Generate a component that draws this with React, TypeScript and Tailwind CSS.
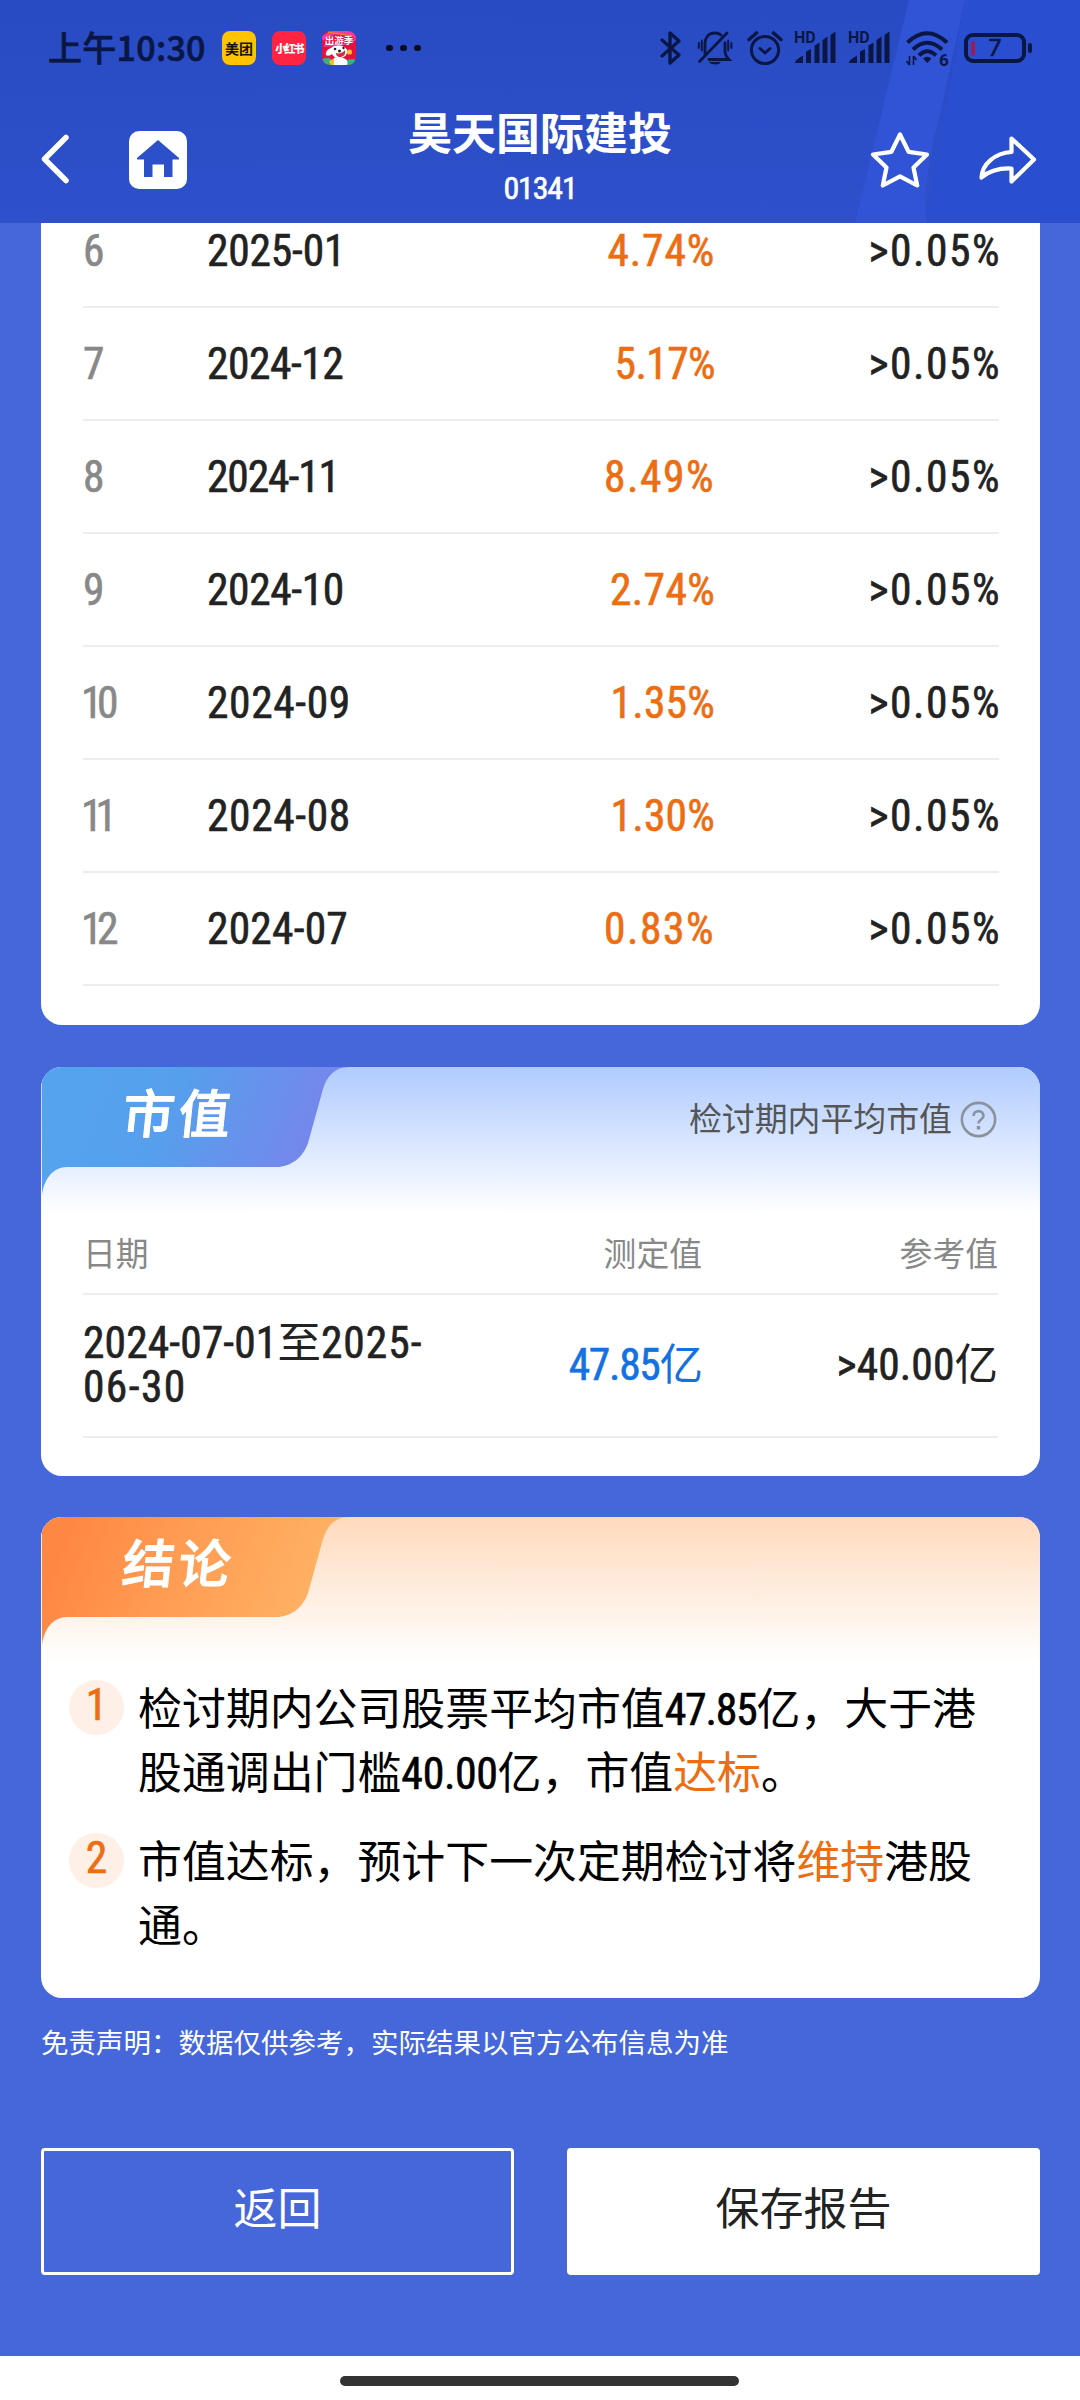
import clsx from "clsx";
import type { ReactNode } from "react";

const ink = "#0a1745";

const rows = [
    { id: 6, month: "2025-01", value: "4.74%", tight: "tracking-[0.8px]", monthTight: "tracking-[-0.2px]" },
    { id: 7, month: "2024-12", value: "5.17%", tight: "tracking-[-0.6px]", monthTight: "tracking-[-0.5px]" },
    { id: 8, month: "2024-11", value: "8.49%", tight: "tracking-[1.5px]", monthTight: "tracking-[-1.1px]" },
    { id: 9, month: "2024-10", value: "2.74%", tight: "tracking-[0.3px]", monthTight: "tracking-[-0.4px]" },
    { id: 10, month: "2024-09", value: "1.35%", tight: "tracking-[0.2px]", monthTight: "tracking-[0.6px]", idTight: "tracking-[-5.5px] -ml-[2px] mr-[2px]" },
    { id: 11, month: "2024-08", value: "1.30%", tight: "tracking-[0.2px]", monthTight: "tracking-[0.6px]", idTight: "tracking-[-7px] -ml-[2px] mr-[2px]" },
    { id: 12, month: "2024-07", value: "0.83%", tight: "tracking-[1.5px]", monthTight: "tracking-[0.2px]", idTight: "tracking-[-5.5px] -ml-[2px] mr-[2px]" },
];

const Num = ({ children, className }: { children: ReactNode; className?: string }) => (
    <span className={clsx("font-['Roboto_Condensed'] [-webkit-text-stroke:0.6px_currentColor]", className)}>{children}</span>
);

const BluetoothIcon = () => (
    <svg width="24" height="36" viewBox="0 0 24 36" fill="none" stroke={ink} strokeWidth="3.4" strokeLinejoin="round" strokeLinecap="round">
        <path d="M3 10 20 25 11 33V3L20 11 3 26" />
    </svg>
);

const MutedBellIcon = () => (
    <svg width="36" height="36" viewBox="0 0 36 36" fill="none" stroke={ink} strokeWidth="2.8" strokeLinecap="round">
        <path d="M8 24V14C8 7 12 3 18 3c2.500 0 4.500.700 6 2" />
        <path d="M28 13v8c0 4 1.500 6 4 8.500H12" />
        <path d="M30 3 2.500 31.500" />
        <path d="M13 32.500h10c-1 2-8 2-10 0z" fill={ink} strokeWidth="1" />
        <path d="M1.800 13v5M4.800 10.500v10M31.200 10.500v10M34.400 13v5" strokeWidth="2" />
    </svg>
);

const AlarmIcon = () => (
    <svg width="36" height="36" viewBox="0 0 36 36" fill="none" stroke={ink} strokeWidth="3" strokeLinecap="round" strokeLinejoin="round">
        <circle cx="18" cy="20" r="13.600" />
        <path d="M13 18.500 18 23l5-4.500" />
        <path d="M9.500 3 2 9.500M26.500 3 34 9.500" strokeWidth="3.600" />
    </svg>
);

const SignalIcon = () => (
    <div className="relative h-[36px] w-[42px]">
        <svg width="42" height="36" viewBox="0 0 42 36" fill={ink}>
            <path d="M1 33c0-3 5-5.500 8-7.500V33H1zM12 21.500l5-2.500v14h-5zM20.500 15.500l5-3V33h-5zM28.500 10l5-3.500V33h-5zM36.500 5l5-3.500V33h-5z" />
        </svg>
        <span className="absolute -top-[1px] left-0 font-['Roboto'] text-[16px] font-bold leading-[18px] text-[#0a1745]">HD</span>
    </div>
);

const WifiIcon = () => (
    <div className="relative h-[36px] w-[44px]">
        <svg width="44" height="36" viewBox="0 0 44 36" fill="none" stroke={ink} strokeWidth="4">
            <path d="M1.500 12.500Q21 -6 41 12.500" />
            <path d="M7 19.500Q21 6 36 19.500" />
            <path d="M13 25.500Q21 17 30 25.500" />
            <path d="M17 28.500q4-3.500 8.500 0L21.300 33z" fill={ink} stroke="none" />
            <path d="M3.500 26v9M3.500 35 .5 31M7.500 35v-9M7.500 26l3 4" strokeWidth="1.600" />
        </svg>
        <span className="absolute left-[33px] top-[21px] font-['Roboto'] text-[17px] font-bold leading-[18px] text-[#0a1745]">6</span>
    </div>
);

const BatteryIcon = () => (
    <div className="flex items-center gap-[2px]">
        <div className="relative flex h-[30px] w-[62px] items-center justify-center rounded-[9px] border-4 border-[#0a1745]">
            <div className="absolute left-[3px] top-[4px] h-[15px] w-[4px] rounded-sm bg-[#a01b53]" />
            <span className="font-['Inter'] text-[23px] leading-none text-[#0a1745] [-webkit-text-stroke:0.6px_currentColor]">7</span>
        </div>
        <div className="h-[10px] w-[4px] rounded-sm bg-[#0a1745]" />
    </div>
);

const CartoonAppIcon = () => (
    <svg className="ml-[16px]" width="34" height="34" viewBox="0 0 34 34">
        <clipPath id="cartoon">
            <rect width="34" height="34" rx="8" />
        </clipPath>
        <g clipPath="url(#cartoon)">
            <rect width="34" height="34" fill="#e3123f" />
            <path d="M0 8C8 0 26-2 34 6" stroke="#f43aa0" strokeWidth="4" fill="none" />
            <path d="M34 4C36 12 20 15 2 15" stroke="#f43aa0" strokeWidth="1.500" fill="none" />
            <path d="M6 1l24 4" stroke="#f07a2c" strokeWidth="1.500" />
            <ellipse cx="5" cy="32" rx="7" ry="5" fill="#3cae84" />
            <ellipse cx="30" cy="32" rx="7" ry="4" fill="#3cae84" />
            <path d="M10 34c-1-6 3-9 8-8s9 3 7 8z" fill="#fff" />
            <path d="M9 17C13 13 23 14 25 19c1 5-3 8-8 8-4 0-6-2-7-4-2 2-5 2-6 1-1-3 2-6 5-7z" fill="#fff" />
            <path d="M14 22c3 1 7 0 9-3 1 5-2 7-5 7s-4-2-4-4z" fill="#d42b3e" />
            <circle cx="13" cy="18" r="1.300" fill="#222" />
            <circle cx="17.500" cy="20" r="1.500" fill="#222" />
            <circle cx="21.500" cy="17" r="1.200" fill="#222" />
            <circle cx="27.500" cy="21" r="2.600" fill="#fcbf2e" />
            <path d="M7 30l5-2v6H9z" fill="#fcbf2e" />
            <text x="17" y="13" textAnchor="middle" fontSize="9.500" fontWeight="700" fill="#fff" fontFamily="Noto Sans CJK SC">出游季</text>
        </g>
    </svg>
);

const StatusBar = () => (
    <div className="flex h-[96px] items-center pl-[48px] pr-[48px]">
        <span className="-mt-[3px] w-[158px] whitespace-nowrap font-['Noto_Sans_CJK_SC'] text-[34px] font-medium leading-none tracking-[0.3px] text-[#0a1745] [-webkit-text-stroke:0.7px_currentColor]">
            上午10:30
        </span>
        <div className="ml-[16px] flex size-[34px] items-center justify-center rounded-[8px] bg-[#ffc300] font-['Noto_Sans_CJK_SC'] text-[14px] font-bold leading-none text-[#17140a]">
            美团
        </div>
        <div className="ml-[16px] flex size-[34px] items-center justify-center rounded-[8px] bg-[#ff2442] font-['Noto_Sans_CJK_SC'] text-[11px] font-black leading-none tracking-[-1.8px] text-white">
            小红书
        </div>
        <CartoonAppIcon />
        <div className="ml-[30px] flex gap-[7.500px]">
            <i className="size-[6.500px] rounded-full bg-[#050b22]" />
            <i className="size-[6.500px] rounded-full bg-[#050b22]" />
            <i className="size-[6.500px] rounded-full bg-[#050b22]" />
        </div>
        <div className="ml-auto flex items-center">
            <BluetoothIcon />
            <div className="w-[14px]" />
            <MutedBellIcon />
            <div className="w-[14px]" />
            <AlarmIcon />
            <div className="w-[11px]" />
            <SignalIcon />
            <div className="w-[12px]" />
            <SignalIcon />
            <div className="w-[16px]" />
            <WifiIcon />
            <div className="w-[14px]" />
            <BatteryIcon />
        </div>
    </div>
);

const Header = () => (
    <header className="relative h-[223px] bg-gradient-to-b from-[#284bc4] to-[#2e51cb]">
        <svg className="absolute right-0 top-0" width="240" height="223" viewBox="0 0 240 223">
            <path d="M125 0h115v223H85z" fill="#2a4ed0" />
            <path d="M69 0h56L101 110Q80 190 87 223H15z" fill="#3054d5" />
        </svg>
        <div className="relative">
            <StatusBar />
            <div className="flex h-[126px] items-center pl-[40px] pr-[43px]">
                <svg width="32" height="54" viewBox="0 0 32 54" fill="none" stroke="#fff" strokeWidth="5.500" strokeLinecap="round" strokeLinejoin="round">
                    <path d="M26 5.500 4.500 27 26 48.500" />
                </svg>
                <svg className="ml-[57px] mt-[1px]" width="58" height="58" viewBox="0 0 58 58">
                    <rect width="58" height="58" rx="10" fill="#fff" />
                    <path d="M29 9 50 27v1.500h-6.500V46H35V33.500H23.500V46H15V28.500H8V27z" fill="#2c50c9" />
                </svg>
                <div className="flex flex-1 flex-col items-center pl-[34px] text-white">
                    <h1 className="mt-[-5px] font-['Noto_Sans_CJK_SC'] text-[44px] font-bold leading-[62px]">昊天国际建投</h1>
                    <Num className="text-[32px] leading-[52px] tracking-[-1.2px]">01341</Num>
                </div>
                <svg className="ml-[10px]" width="60" height="60" viewBox="0 0 60 60" fill="none" stroke="#fff" strokeWidth="4.200" strokeLinejoin="round">
                    <path d="M31 5.500 39.600 22.800 58 25.500 44.500 38.500 48.200 56.500 31 47.300 13.800 56.500 17.500 38.500 4 25.500 22.400 22.800z" />
                </svg>
                <svg className="ml-[48px]" width="60" height="60" viewBox="0 0 60 60" fill="none" stroke="#fff" strokeWidth="4.200" strokeLinejoin="round">
                    <path d="M34.500 9.500 57 30.500 34.500 52.500V39.500C23 39 12 42 4.500 48.500 5 35 18 24 34.500 23z" />
                </svg>
            </div>
        </div>
    </header>
);

type CardProps = {
    id: string;
    title: string;
    from: string;
    mid: string;
    to: string;
    glow: string;
    className?: string;
    extra?: ReactNode;
    children: ReactNode;
};

const TabCard = ({ id, title, from, mid, to, glow, className, extra, children }: CardProps) => (
    <section className={clsx("relative overflow-hidden rounded-[21px] bg-white", className)}>
        <div className={clsx("absolute inset-x-0 top-0 h-[146px] bg-gradient-to-b to-white", glow)} />
        <svg className="absolute left-0 top-0" width="310" height="130" viewBox="0 0 310 130">
            <defs>
                <linearGradient id={id} x1="0" y1="0" x2="280" y2="110" gradientUnits="userSpaceOnUse">
                    <stop offset="0.100" stopColor={from} />
                    <stop offset="0.450" stopColor={mid} />
                    <stop offset="1" stopColor={to} />
                </linearGradient>
            </defs>
            <path d="M1 0H308C294 0 286 9 282 22L267 76C262 91 249 100 236 100H26C12 100 3 112 1 128z" fill={`url(#${id})`} />
        </svg>
        <div className="relative flex h-[106px] items-center justify-between pl-[82px] pr-[43px]">
            <h2 className="-mt-[18px] -skew-x-6 font-['Noto_Sans_CJK_SC'] text-[52px] font-medium leading-[60px] tracking-[4px] text-white [-webkit-text-stroke:1px_#fff]">
                {title}
            </h2>
            {extra}
        </div>
        <div className="relative">{children}</div>
    </section>
);

const HelpIcon = () => (
    <svg width="37" height="37" viewBox="0 0 37 37" fill="none" stroke="#8c929c" strokeWidth="2.600">
        <circle cx="18.500" cy="18.500" r="16.600" />
        <path d="M13.500 15c0-6.500 10-6.500 10 0 0 3-5 3.500-5 7.500" />
        <path d="M18.500 25v3.400" strokeWidth="3.400" />
    </svg>
);

const Badge = ({ n }: { n: number }) => (
    <div className="flex size-[55px] shrink-0 items-center justify-center rounded-full bg-[#fef0e6]">
        <Num className="-mt-[3px] text-[43.500px] leading-none text-[#ec6d12]">{n}</Num>
    </div>
);

export default function App() {
    return (
        <div className="flex h-[2400px] w-[1080px] flex-col overflow-hidden bg-[#4567da] font-['Roboto_Condensed','Noto_Sans_CJK_SC',sans-serif] text-[#222]">
            <Header />

            <main className="h-[2133px] overflow-hidden px-[41px]">
                <div className="mr-[-1px] overflow-hidden rounded-b-[21px] bg-white pb-[39px] pl-[42px] pr-[41px]">
                    {rows.map((row, i) => (
                        <div
                            key={row.id}
                            className={clsx("flex h-[113px] items-center border-b-2 border-[#ededed] pt-[3px] text-[43.500px]", i === 0 && "-mt-[28px]")}
                        >
                            <Num className={clsx("w-[124px] text-[#888]", row.idTight)}>{row.id}</Num>
                            <Num className={clsx("w-[224px]", row.monthTight)}>{row.month}</Num>
                            <Num className={clsx("w-[284px] text-right text-[#ec6d12]", row.tight)}>{row.value}</Num>
                            <Num className="-mr-[2px] flex-1 text-right tracking-[1.5px]">&gt;0.05%</Num>
                        </div>
                    ))}
                </div>

                <TabCard
                    id="cap"
                    title="市值"
                    from="#55a3ee"
                    mid="#569fec"
                    to="#7a83ec"
                    glow="from-[#b0cbff]"
                    className="mr-[-1px] mt-[42px] h-[409px]"
                    extra={
                        <div className="flex items-center gap-[8px] text-[32.900px] text-[#555]">
                            检讨期内平均市值
                            <HelpIcon />
                        </div>
                    }
                >
                    <div className="mx-[42px]">
                        <div className="flex h-[122px] items-end border-b-2 border-[#ededed] pb-[14px] text-[32.800px] leading-[48px] text-[#888]">
                            <span className="w-[344px]">日期</span>
                            <span className="w-[275px] text-right">测定值</span>
                            <span className="flex-1 text-right">参考值</span>
                        </div>
                        <div className="flex h-[143px] items-center border-b-2 border-[#ededed] text-[43.500px] leading-[44px]">
                            <span className="w-[350px]">
                                <Num className="tracking-[0.1px]">2024-07-01</Num>至<Num className="tracking-[1px]">2025-</Num>
                                <br />
                                <Num className="tracking-[1.4px]">06-30</Num>
                            </span>
                            <span className="w-[270px] text-right text-[#1371e2]">
                                <Num className="tracking-[-1.3px]">47.85</Num>亿
                            </span>
                            <span className="flex-1 text-right">
                                <Num className="tracking-[0.1px]">&gt;40.00</Num>亿
                            </span>
                        </div>
                    </div>
                </TabCard>

                <TabCard
                    id="conclusion"
                    title="结论"
                    from="#ff8744"
                    mid="#ff9b52"
                    to="#ffb466"
                    glow="from-[#ffdabd]"
                    className="mr-[-1px] mt-[41px] h-[481px]"
                >
                    <ol className="pl-[28px] text-[43.900px] leading-[63.500px] text-black">
                        <li className="mt-[57px] flex items-start gap-[14px]">
                            <Badge n={1} />
                            <p className="-mt-[1px]">
                                检讨期内公司股票平均市值<Num className="tracking-[-1.3px]">47.85</Num>亿，大于港
                                <br />
                                股通调出门槛<Num className="tracking-[-0.4px]">40.00</Num>亿，市值<span className="text-[#ec6d12]">达标</span>。
                            </p>
                        </li>
                        <li className="mt-[27px] flex items-start gap-[14px]">
                            <Badge n={2} />
                            <p className="-mt-[1px]">
                                市值达标，预计下一次定期检讨将<span className="text-[#ec6d12]">维持</span>港股
                                <br />
                                通。
                            </p>
                        </li>
                    </ol>
                </TabCard>

                <p className="mt-[25px] text-[27.500px] leading-[42px] text-white">免责声明：数据仅供参考，实际结果以官方公布信息为准</p>

                <div className="mr-[-1px] mt-[83px] flex justify-between text-[44px]">
                    <button className="h-[127px] w-[473px] rounded-[4px] border-[3px] border-white pb-[3px] text-white">返回</button>
                    <button className="h-[127px] w-[473px] rounded-[4px] bg-white pb-[3px]">保存报告</button>
                </div>
            </main>

            <footer className="flex h-[44px] justify-center bg-white pr-[2px] pt-[20px]">
                <div className="h-[10px] w-[399px] rounded-full bg-[#333]" />
            </footer>
        </div>
    );
}
